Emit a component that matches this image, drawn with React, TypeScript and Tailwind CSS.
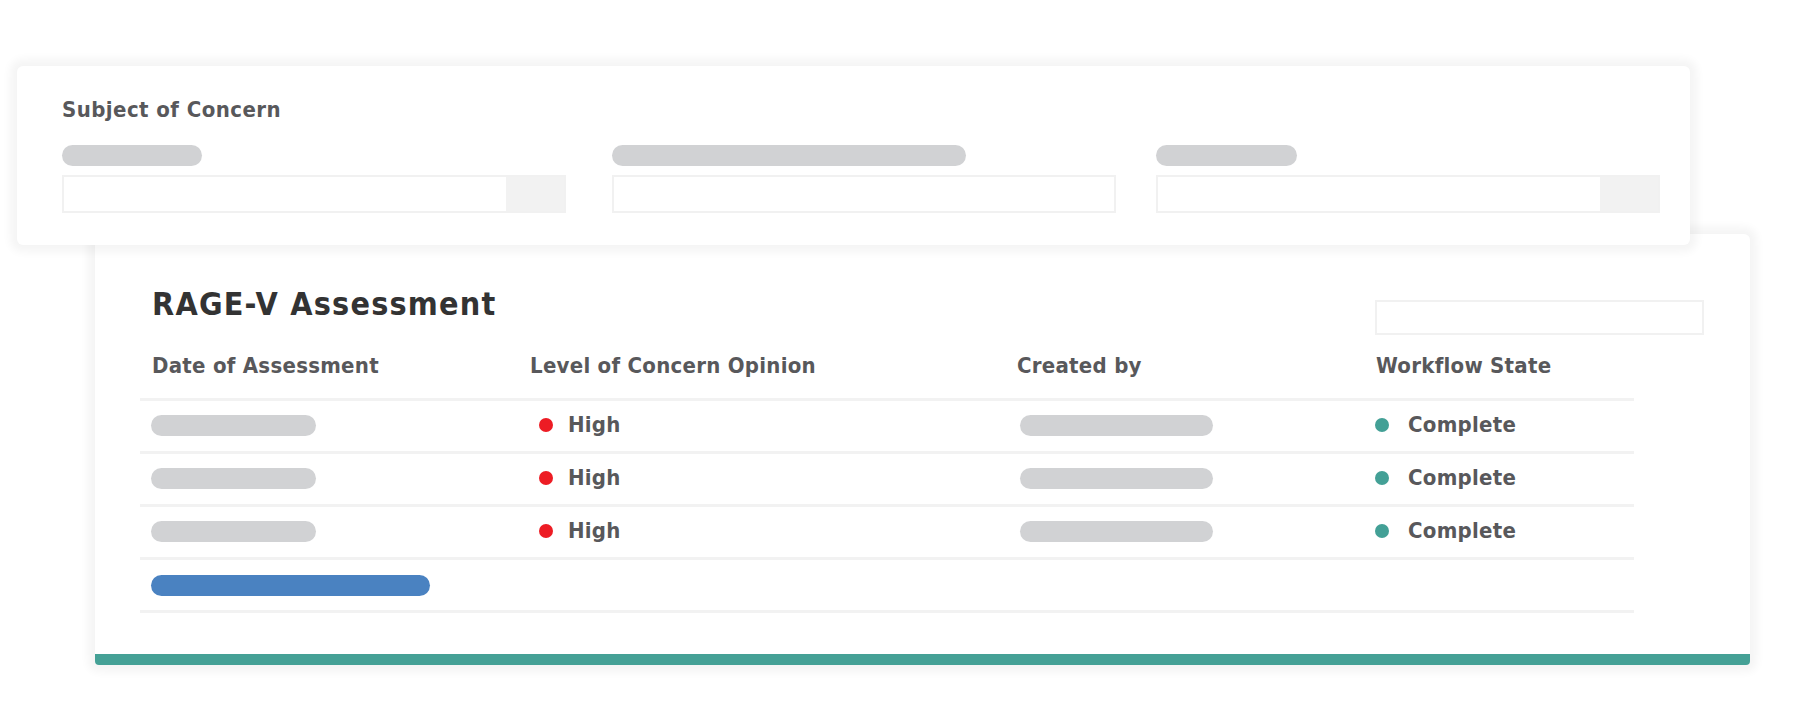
const font = "font-['Liberation_Sans_Narrow','DejaVu_Sans_Condensed','Liberation_Sans',sans-serif]";

const topFields = [
  { bar: "w-[140px]", grey: true },
  { bar: "w-[354px]", grey: false },
  { bar: "w-[141px]", grey: true },
];

const rows = [1, 2, 3];

function Pill({ className }: { className: string }) {
  return <div className={`h-[21px] rounded-full ${className}`} />;
}

export default function App() {
  return (
    <div className={`w-[1804px] h-[701px] bg-white overflow-hidden ${font}`}>
      {/* Subject of Concern card */}
      <div className="relative z-10 ml-[17px] mt-[66px] w-[1673px] h-[179px] bg-white rounded-md shadow-[0_0_8px_7px_rgba(0,0,0,0.045)] pl-[45px] pt-[33px]">
        <div className="text-[22px] leading-[22px] font-bold text-[#58585b] tracking-[0.02em]">Subject of Concern</div>
        <div className="flex mt-6">
          {topFields.map((f, i) => (
            <div key={i} className={`w-[504px] ${i === 1 ? "ml-[46px]" : i === 2 ? "ml-[40px]" : ""}`}>
              <Pill className={`bg-[#d1d2d4] ${f.bar}`} />
              <div className="mt-[9px] h-[38px] border-2 border-[#f1f1f1] flex justify-end">
                {f.grey && <div className="w-[58px] h-full bg-[#f2f2f2]" />}
              </div>
            </div>
          ))}
        </div>
      </div>

      {/* RAGE-V card */}
      <div className="relative ml-[95px] -mt-[11px] w-[1655px] bg-white rounded-t-md rounded-b-sm overflow-hidden shadow-[0_0_8px_7px_rgba(0,0,0,0.045)]">
        <div className="pt-[54px] pl-[57px] pr-[46px] flex justify-between items-start">
          <div className="text-[32px] leading-[32px] font-bold text-[#333333] tracking-[0.038em]">RAGE-V Assessment</div>
          <div className="mt-[12px] w-[329px] h-[35px] border-2 border-[#f1f1f1]" />
        </div>

        <div className="ml-[45px] w-[1494px] mt-[20px] pb-[41px]">
          <div className="grid grid-cols-[378px_487px_359px_1fr] pb-[21px] border-b-[3px] border-[#f2f2f2] text-[22px] leading-[22px] font-bold text-[#58585b] tracking-[0.012em]">
            <div className="pl-3">Date of Assessment</div>
            <div className="pl-3">Level of Concern Opinion</div>
            <div className="pl-3">Created by</div>
            <div className="pl-3">Workflow State</div>
          </div>

          {rows.map((r) => (
            <div key={r} className="grid grid-cols-[378px_487px_359px_1fr] items-center h-[53px] pb-[2px] border-b-[3px] border-[#f2f2f2] text-[22px] leading-[22px] font-bold text-[#58585b] tracking-[0.012em]">
              <div className="pl-[11px]">
                <Pill className="w-[165px] bg-[#d1d2d4]" />
              </div>
              <div className="pl-[21px] flex items-center gap-[15px]">
                <span className="w-[14px] h-[14px] rounded-full bg-[#ed1c24]" />
                <span>High</span>
              </div>
              <div className="pl-[15px]">
                <Pill className="w-[193px] bg-[#d1d2d4]" />
              </div>
              <div className="pl-[11px] flex items-center gap-[19px]">
                <span className="w-[14px] h-[14px] rounded-full bg-[#43a096]" />
                <span>Complete</span>
              </div>
            </div>
          ))}

          <div className="h-[53px] flex items-center pl-[11px] border-b-[3px] border-[#f2f2f2]">
            <Pill className="w-[279px] bg-[#4a82c1]" />
          </div>
        </div>

        <div className="h-[11px] bg-[#45a196]" />
      </div>
    </div>
  );
}
